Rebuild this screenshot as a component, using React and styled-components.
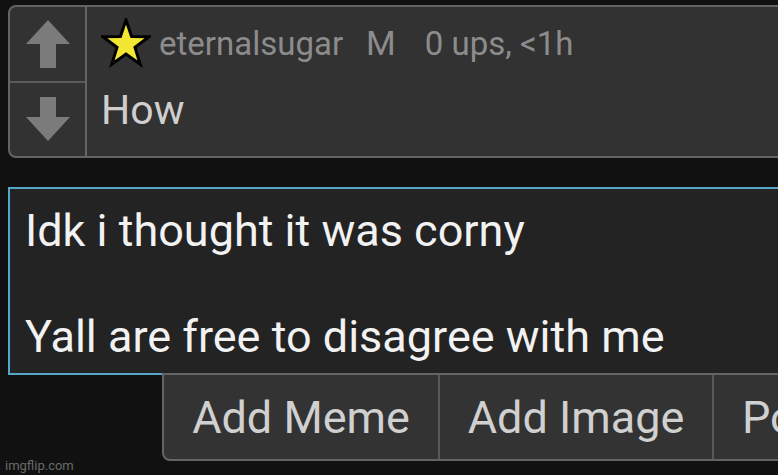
import React from "react";
import styled, { createGlobalStyle } from "styled-components";

const GlobalStyle = createGlobalStyle`
  html, body {
    margin: 0;
    padding: 0;
    background: #111111;
    overflow: hidden;
  }
  body {
    font-family: Roboto, "Liberation Sans", sans-serif;
  }
`;

const Page = styled.div`
  position: relative;
  width: 778px;
  height: 475px;
  overflow: hidden;
  padding: 5px 0 0 8px;
  box-sizing: border-box;
`;

const Card = styled.div`
  display: flex;
  width: 900px;
  height: 153px;
  box-sizing: border-box;
  background: #323232;
  border: 2px solid #646464;
  border-radius: 8px;
`;

const VoteCol = styled.div`
  width: 75px;
  display: flex;
  flex-direction: column;
  border-right: 2px solid #646464;
`;

const VoteBtn = styled.div`
  flex: 1;
  display: flex;
  align-items: center;
  justify-content: center;
  border-top: ${(p) => (p.$divider ? "2px solid #5a5a5a" : "none")};
`;

const Body = styled.div`
  flex: 1;
  padding: 10px 0 0 14px;
`;

const Meta = styled.div`
  display: flex;
  align-items: center;
  height: 52px;
  color: #8c8c8c;
  font-size: 33px;
  white-space: nowrap;
`;

const Name = styled.span`
  margin-left: 8px;
`;

const Badge = styled.span`
  margin-left: 23px;
  font-size: 34px;
`;

const Stats = styled.span`
  margin-left: 29px;
`;

const Text = styled.div`
  color: #cfcfcf;
  font-size: 41px;
  line-height: 48px;
  margin-top: 17px;
`;

const Reply = styled.div`
  width: 900px;
  height: 188px;
  margin-top: 29px;
  box-sizing: border-box;
  background: #232323;
  border: 2px solid #56a6c8;
  padding: 15px 0 0 15px;
  color: #f2f2f2;
  font-size: 45px;
  line-height: 53px;
  white-space: pre;
`;

const Toolbar = styled.div`
  display: flex;
  width: 800px;
  height: 88px;
  margin: -2px 0 0 154px;
  box-sizing: border-box;
  background: #333333;
  border: 2px solid #646464;
  border-radius: 0 0 0 8px;
`;

const ToolBtn = styled.div`
  width: ${(p) => p.$w}px;
  flex-shrink: 0;
  display: flex;
  align-items: center;
  justify-content: ${(p) => (p.$left ? "flex-start" : "center")};
  padding-left: ${(p) => (p.$left ? "28px" : "0")};
  box-sizing: border-box;
  color: #d0d0d0;
  font-size: 45px;
  white-space: nowrap;
  border-right: ${(p) => (p.$last ? "none" : "2px solid #5a5a5a")};
`;

const Watermark = styled.div`
  position: absolute;
  left: 5px;
  bottom: 2px;
  color: #6a6a6a;
  font-size: 13px;
`;

const UpArrow = () => (
  <svg width="46" height="50" viewBox="0 0 46 50">
    <path d="M23 1 L45 25 L31 25 L31 49 L15 49 L15 25 L1 25 Z" fill="#7b7b7b" />
  </svg>
);

const DownArrow = () => (
  <svg width="46" height="46" viewBox="0 0 46 46">
    <path d="M15 1 L31 1 L31 21 L45 21 L23 45 L1 21 L15 21 Z" fill="#7b7b7b" />
  </svg>
);

const Star = () => (
  <svg width="50" height="50" viewBox="0 0 50 50">
    <path
      d="M25 2 L30.6 18.6 L48 18.8 L34 29.4 L39.2 46.2 L25 36 L10.8 46.2 L16 29.4 L2 18.8 L19.4 18.6 Z"
      fill="#f3e733"
      stroke="#000"
      strokeWidth="3"
      strokeLinejoin="miter"
    />
  </svg>
);

export default function App() {
  return (
    <>
      <GlobalStyle />
      <Page>
        <Card>
          <VoteCol>
            <VoteBtn>
              <UpArrow />
            </VoteBtn>
            <VoteBtn $divider>
              <DownArrow />
            </VoteBtn>
          </VoteCol>
          <Body>
            <Meta>
              <Star />
              <Name>eternalsugar</Name>
              <Badge>M</Badge>
              <Stats>0 ups, &lt;1h</Stats>
            </Meta>
            <Text>How</Text>
          </Body>
        </Card>
        <Reply>{"Idk i thought it was corny\n\nYall are free to disagree with me"}</Reply>
        <Toolbar>
          <ToolBtn $w={276}>Add Meme</ToolBtn>
          <ToolBtn $w={274}>Add Image</ToolBtn>
          <ToolBtn $w={250} $left $last>Post</ToolBtn>
        </Toolbar>
        <Watermark>imgflip.com</Watermark>
      </Page>
    </>
  );
}
